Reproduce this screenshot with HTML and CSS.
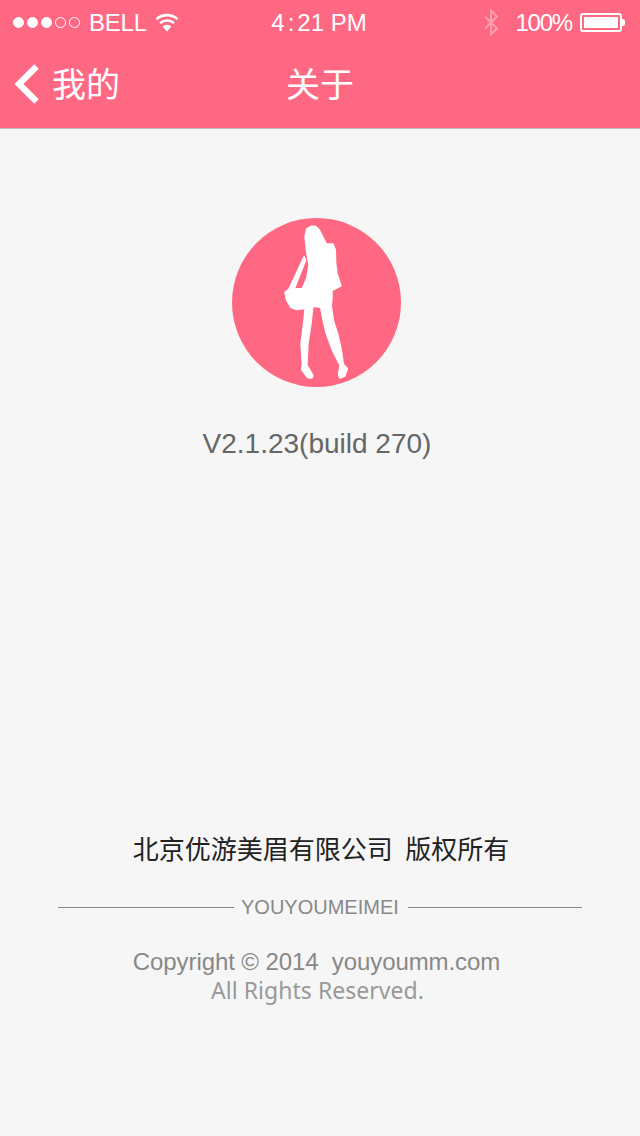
FILE: index.html
```html
<!DOCTYPE html>
<html lang="zh">
<head>
<meta charset="utf-8">
<title>关于</title>
<link rel="stylesheet" href="styles.css">
</head>
<body>
<header class="header">
  <div class="status">
    <div class="status-left">
      <span class="signal"><i class="dot on"></i><i class="dot on"></i><i class="dot on"></i><i class="dot"></i><i class="dot"></i></span>
      <span class="carrier">BELL</span>
      <svg class="wifi" width="24" height="20" viewBox="0 0 24 20"><path d="M12 19.500 7.600 14.400a6.800 6.800 0 0 1 8.800 0Z" fill="#fff"/><path d="M5 11.200a10.500 10.500 0 0 1 14 0M1.500 7.200a15.500 15.500 0 0 1 21 0" fill="none" stroke="#fff" stroke-width="2.600"/></svg>
    </div>
    <div class="status-time">4<span class="colon">:</span>21 PM</div>
    <div class="status-right">
      <svg class="bt" width="16" height="27" viewBox="0 0 16 27"><path d="M2 7.500 14 19.500 8 25.500V1.500L14 7.500 2 19.500" fill="none" stroke="#fff" stroke-opacity=".35" stroke-width="2"/></svg>
      <span class="percent">100%</span>
      <span class="battery"><span class="battery-fill"></span></span>
      <span class="battery-tip"></span>
    </div>
  </div>
  <nav class="nav">
    <div class="back">
      <svg width="26" height="42" viewBox="0 0 26 42"><path d="M22.500 3.500 5 21l17.500 17.500" fill="none" stroke="#fff" stroke-width="6.400"/></svg>
      <span class="nav-text">我的</span>
    </div>
    <div class="title nav-text">关于</div>
    <div></div>
  </nav>
</header>
<main class="main">
  <section class="hero">
    <svg class="logo" width="169" height="169" viewBox="21 24 506 506">
      <circle cx="274" cy="277" r="253" fill="#ff6883"/>
      <path class="figure" d="M258 49 272 50 282 60 292 80 303 102 323 102 330 120 331 160 335 190 347 227 320 241 320 262 318 288 324 330 338 375 348 420 354 462 366 475 358 498 344 503 340 492 345 465 322 420 302 365 290 310 287 291 263 288 257 340 248 400 245 465 263 495 260 503 247 501 230 478 232 460 228 400 237 330 240 295 215 298 197 291 185 270 180 247 192 237 237 140 241 150 207 237 232 235 245 205 252 165 245 125 240 80 245 57Z"/>
    </svg>
    <p class="version">V2.1.23(build 270)</p>
  </section>
  <section class="footer">
    <p class="owner">北京优游美眉有限公司&nbsp;&nbsp;版权所有</p>
    <div class="divider"><span class="rule rule-left"></span><span class="brand">YOUYOUMEIMEI</span><span class="rule rule-right"></span></div>
    <p class="copy">Copyright © 2014&nbsp;&nbsp;youyoumm.com</p>
    <p class="rights">All Rights Reserved.</p>
  </section>
</main>
</body>
</html>
```
FILE: styles.css
```css
* { box-sizing: border-box; }
html, body { margin: 0; height: 100%; }
body {
  width: 640px;
  height: 1136px;
  overflow: hidden;
  background: #f6f6f6;
  font-family: "Liberation Sans", "Noto Sans CJK SC", sans-serif;
  display: flex;
  flex-direction: column;
}
p { margin: 0; }
.header {
  background: #ff6883;
  height: 129px;
  border-bottom: 1px solid #bdbdbd;
  color: #fff;
}
.status {
  height: 40px;
  padding: 5px 15px 0 13px;
  display: grid;
  grid-template-columns: 1fr auto 1fr;
  align-items: center;
  font-size: 24px;
}
.status-left, .status-right { display: flex; align-items: center; }
.status-right { justify-content: flex-end; }
.signal { display: flex; gap: 3px; margin-right: 9px; }
.dot { width: 11px; height: 11px; border-radius: 50%; border: 1px solid #fff; display: block; }
.dot.on { background: #fff; }
.carrier { letter-spacing: -0.200px; }
.wifi { margin-left: 8px; margin-top: -2px; }
.colon { margin: 0 3px; }
.bt { margin: -1px 16px 0 0; }
.percent { margin-right: 8px; letter-spacing: -1.200px; }
.battery { width: 42px; height: 19px; border: 2px solid #fff; border-radius: 3px; padding: 2px; display: block; margin-top: -1px; }
.battery-fill { display: block; height: 100%; background: #fff; border-radius: 1px; }
.battery-tip { width: 3px; height: 7px; background: #fff; border-radius: 0 2px 2px 0; display: block; margin-top: -1px; }
.nav {
  height: 88px;
  padding: 0 14px;
  display: grid;
  grid-template-columns: 1fr auto 1fr;
  align-items: center;
  font-size: 34px;
}
.nav-text { padding-bottom: 4px; }
.back { display: flex; align-items: center; gap: 12px; }
.back svg { display: block; }
.main {
  flex: 1;
  display: flex;
  flex-direction: column;
  justify-content: space-between;
  align-items: center;
}
.hero { display: flex; flex-direction: column; align-items: center; padding: 89px 6px 0 0; }
.logo { display: block; }
.figure { fill: #fff; stroke: #fff; stroke-width: 5; stroke-linejoin: round; }
.version { font-size: 28px; line-height: 32px; color: #666; margin-top: 41px; }
.footer { width: 524px; padding-bottom: 132px; display: flex; flex-direction: column; align-items: center; }
.owner { font-size: 26px; line-height: 36px; color: #222; word-spacing: -1px; padding-left: 2px; }
.divider { width: 100%; display: flex; align-items: center; margin-top: 27px; font-size: 20px; line-height: 24px; color: #888; }
.brand { margin-left: 7px; }
.rule { height: 1px; background: #888; }
.rule-left { width: 176px; }
.rule-right { width: 174px; margin-left: auto; }
.copy { font-size: 24px; line-height: 30px; color: #888; margin-top: 28px; padding-right: 7px; letter-spacing: -0.080px; }
.rights { font-family: "Noto Sans", sans-serif; font-size: 23px; line-height: 28px; margin-top: -1px; color: #999; padding-right: 5px; letter-spacing: 0.030px; }
```
